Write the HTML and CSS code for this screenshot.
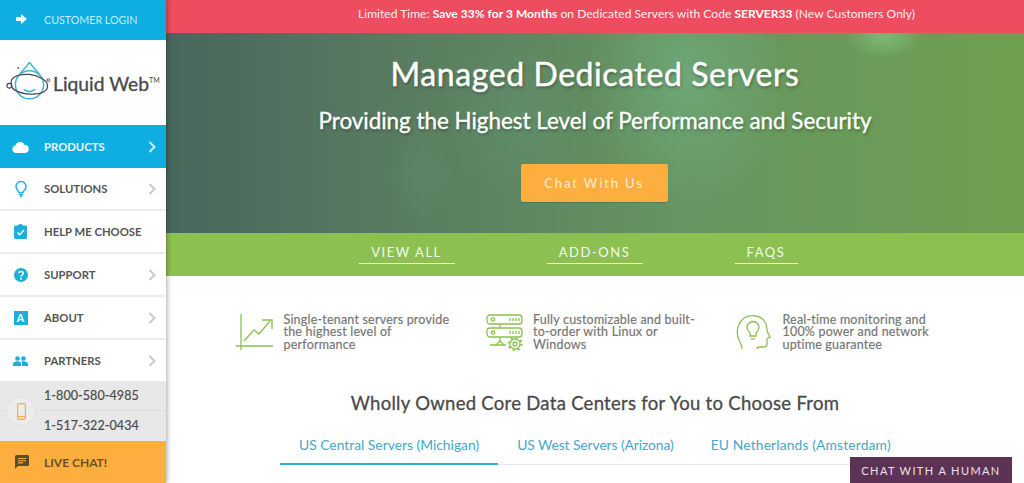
FILE: index.html
```html
<!DOCTYPE html>
<html lang="en">
<head>
<meta charset="utf-8">
<title>Managed Dedicated Servers</title>
<link rel="stylesheet" href="styles.css">
</head>
<body>
<div class="page">
  <aside class="sidebar">
    <a class="login"><svg class="login-icon" viewBox="0 0 12 12"><path d="M0 4h5V1l6 5-6 5V8H0z" fill="#fff"/></svg><span>CUSTOMER LOGIN</span></a>
    <div class="logo">
      <svg class="logo-mark" width="47" height="44" viewBox="0 0 50 44" fill="none">
        <path d="M25 2c3 5 9 10 11 14M25 2c-3 5-9 10-11 14" stroke="#3fb4d8" stroke-width="1.5"/>
        <circle cx="25" cy="26" r="15" stroke="#3fb4d8" stroke-width="1.6"/>
        <path d="M19 31c4 3 8 3 12 0" stroke="#3fb4d8" stroke-width="1.7"/>
        <path d="M6 26C3 19 12 14 25 15c10 1 20 7 19 12M44 27c1 6-7 9-15 9-12 0-24-4-23-10" stroke="#4a4a4a" stroke-width="1.3"/>
        <circle cx="3.500" cy="27" r="2.500" stroke="#4a4a4a" stroke-width="1.3"/>
        <circle cx="45" cy="21" r="1.500" stroke="#4a4a4a"/>
        <circle cx="13" cy="8" r="1" fill="#4a4a4a"/>
      </svg>
      <span class="logo-text">Liquid Web<sup class="logo-tm">TM</sup></span>
    </div>
    <nav class="menu">
      <a class="item active"><span class="ic"><svg width="17" height="12" viewBox="0 0 17 12"><path d="M4 12a3.800 3.800 0 0 1-.6-7.500A5 5 0 0 1 12.700 4 4 4 0 0 1 13 12z" fill="#fff"/></svg></span><span class="lbl">PRODUCTS</span><svg class="chev" viewBox="0 0 8 12"><path d="M1.500 1l5 5-5 5" fill="none" stroke="currentColor" stroke-width="2"/></svg></a>
      <a class="item"><span class="ic"><svg width="12" height="16" viewBox="0 0 12 16" fill="none" stroke="#1eaedb" stroke-width="1.400"><path d="M4 11.500C3.500 9.500 1 8.500 1 5.500a5 5 0 0 1 10 0c0 3-2.500 4-3 6z"/><path d="M4 13.500h4M5 15.300h2"/></svg></span><span class="lbl">SOLUTIONS</span><svg class="chev" viewBox="0 0 8 12"><path d="M1.500 1l5 5-5 5" fill="none" stroke="currentColor" stroke-width="2"/></svg></a>
      <a class="item"><span class="ic"><svg width="13" height="15" viewBox="0 0 13 15"><path d="M1.500 1.500H4a2.500 1.500 0 0 1 5 0h2.500A1.500 1.500 0 0 1 13 3v10.500a1.500 1.500 0 0 1-1.500 1.500h-10A1.500 1.500 0 0 1 0 13.500V3a1.500 1.500 0 0 1 1.500-1.500z" fill="#1eaedb"/><path d="M3.500 8.500l2.200 2.200 4-4.400" fill="none" stroke="#fff" stroke-width="1.500"/></svg></span><span class="lbl">HELP ME CHOOSE</span></a>
      <a class="item"><span class="ic"><svg width="14" height="14" viewBox="0 0 14 14"><circle cx="7" cy="7" r="7" fill="#1eaedb"/><path d="M4.800 5.300C5 2.800 9.300 3 9.300 5.300 9.300 7 7 7 7 8.700" fill="none" stroke="#fff" stroke-width="1.500"/><circle cx="7" cy="10.800" r="1" fill="#fff"/></svg></span><span class="lbl">SUPPORT</span><svg class="chev" viewBox="0 0 8 12"><path d="M1.500 1l5 5-5 5" fill="none" stroke="currentColor" stroke-width="2"/></svg></a>
      <a class="item"><span class="ic"><span class="about-a">A</span></span><span class="lbl">ABOUT</span><svg class="chev" viewBox="0 0 8 12"><path d="M1.500 1l5 5-5 5" fill="none" stroke="currentColor" stroke-width="2"/></svg></a>
      <a class="item last"><span class="ic"><svg width="15" height="10" viewBox="0 0 15 10" fill="#1eaedb"><circle cx="4.500" cy="2.500" r="2.300"/><circle cx="10.500" cy="2.500" r="2.300"/><path d="M0 10V8c0-1.800 2.500-2.700 4.500-2.700S8 6.200 8 8v2zM9 10V8c0-1-.3-1.800-1-2.400.9-.3 1.800-.3 2.500-.3 2 0 4.500.9 4.500 2.700v2z"/></svg></span><span class="lbl">PARTNERS</span><svg class="chev" viewBox="0 0 8 12"><path d="M1.500 1l5 5-5 5" fill="none" stroke="currentColor" stroke-width="2"/></svg></a>
    </nav>
    <div class="phones">
      <div class="phone-badge"><svg width="9" height="17" viewBox="0 0 10 19" fill="none" stroke="#f9ac41" stroke-width="1.300"><rect x=".7" y=".7" width="8.600" height="17.600" rx="1.500"/><path d="M.7 15h8.600"/></svg></div>
      <div class="phone">1-800-580-4985</div>
      <div class="phone">1-517-322-0434</div>
    </div>
    <a class="chat"><svg width="14" height="14" viewBox="0 0 14 14"><path d="M1.500 0h11A1.500 1.500 0 0 1 14 1.500v8a1.500 1.500 0 0 1-1.500 1.500H3l-3 3V1.500A1.500 1.500 0 0 1 1.500 0z" fill="#5f4a2a"/><path d="M3 3.500h8M3 5.700h8M3 7.900h5" stroke="#f9ac41" stroke-width="1.100"/></svg><span>LIVE CHAT!</span></a>
  </aside>
  <main class="main">
    <div class="promo">Limited Time: <b>Save 33% for 3 Months</b> on Dedicated Servers with Code <b>SERVER33</b> (New Customers Only)</div>
    <section class="hero">
      <h1 class="hero-title">Managed Dedicated Servers</h1>
      <h2 class="hero-sub">Providing the Highest Level of Performance and Security</h2>
      <a class="cta">Chat With Us</a>
    </section>
    <nav class="subnav">
      <a class="sublink w-a">VIEW ALL</a>
      <a class="sublink w-b">ADD-ONS</a>
      <a class="sublink w-c">FAQS</a>
    </nav>
    <section class="features">
      <div class="feature">
        <svg class="f-icon" width="38" height="38" viewBox="0 0 38 38" fill="none" stroke="#8cc152" stroke-width="1.300"><path d="M5 1v36M0 33h37"/><path d="M8 28l10-11 5 4 11-13"/><path d="M26 7h10v9"/></svg>
        <p>Single-tenant servers provide the highest level of performance</p>
      </div>
      <div class="feature">
        <svg class="f-icon" width="38" height="38" viewBox="0 0 38 38" fill="none" stroke="#8cc152" stroke-width="1.300"><rect x="1" y="2" width="35" height="9" rx="3"/><rect x="1" y="15" width="35" height="9" rx="3"/><circle cx="7" cy="6.500" r="1.700"/><circle cx="7" cy="19.500" r="1.700"/><path d="M24 5v3M27 5v3M30 5v3M33 5v3M24 18v3M27 18v3M30 18v3M33 18v3M14 11v4M14 24v4M4 32h16"/><path d="M10 32l4-4 4 4"/><circle cx="29" cy="31" r="5"/><circle cx="29" cy="31" r="2"/><circle cx="29" cy="31" r="6.500" stroke-width="2" stroke-dasharray="2 3.100"/></svg>
        <p>Fully customizable and built-to-order with Linux or Windows</p>
      </div>
      <div class="feature">
        <svg class="f-icon" width="38" height="38" viewBox="0 0 38 38" fill="none" stroke="#8cc152" stroke-width="1.300"><path d="M7 36c0-4-1-5-3-9C1 21 2 12 7 7c6-6 18-6 23 2 2 3 2 6 2 9l3 6c-1 1-3 1-3 2v5c0 2-2 3-4 3h-3c-2 0-3 1-3 2"/><path d="M15 20c-1-1-3-3-3-5.500a6 6 0 0 1 12 0c0 2.500-2 4.500-3 5.500v3h-6z"/><path d="M16 26h4"/></svg>
        <p>Real-time monitoring and 100% power and network uptime guarantee</p>
      </div>
    </section>
    <h3 class="dc-title">Wholly Owned Core Data Centers for You to Choose From</h3>
    <div class="tabs">
      <a class="tab on">US Central Servers (Michigan)</a>
      <a class="tab t-west">US West Servers (Arizona)</a>
      <a class="tab t-eu">EU Netherlands (Amsterdam)</a>
    </div>
  </main>
</div>
<a class="human">CHAT WITH A HUMAN</a>
</body>
</html>
```
FILE: styles.css
```css
* { box-sizing: border-box; }
html, body { margin: 0; height: 483px; overflow: hidden; background: #fff; }
body { font-family: "Lato", "Noto Sans", sans-serif; color: #4a4a4a; }
.page { display: flex; height: 483px; }

.sidebar { width: 166px; flex: none; display: flex; flex-direction: column; background: #fff; box-shadow: 1px 0 5px rgba(0,0,0,.35); z-index: 2; }
.login { height: 40px; flex: none; background: #0eaee2; color: #c4ecf9; display: flex; align-items: center; padding: 0 0 2px 16px; gap: 16px; font-size: 10.700px; }
.login-icon { width: 12px; height: 12px; flex: none; }
.logo { height: 85px; flex: none; display: flex; align-items: center; padding-left: 6px; gap: 0; }
.logo-mark { flex: none; margin-top: -3px; }
.logo-text { font-size: 19.300px; color: #4a4a4a; white-space: nowrap; position: relative; top: 1px; -webkit-text-stroke: .35px #4a4a4a; }
.logo-tm { font-size: 7px; vertical-align: 8px; line-height: 0; -webkit-text-stroke: 0; }

.menu { display: flex; flex-direction: column; }
.item { height: 43px; display: flex; align-items: center; border-bottom: 2px solid #ececec; font-size: 11.300px; font-weight: 700; color: #555; }
.item.last { height: 41px; border-bottom: 0; }
.item.active { background: #0eaee2; color: #e6f6fc; border-bottom: 0; }
.ic { width: 44px; flex: none; display: flex; justify-content: center; padding-right: 3px; }
.lbl { flex: 1; white-space: nowrap; }
.chev { width: 8px; height: 12px; margin-right: 10px; color: #c9c9c9; flex: none; }
.active .chev { color: #cdeefa; }
.about-a { width: 14px; height: 14px; background: #1eaedb; color: #fff; font-size: 10.500px; display: flex; align-items: center; justify-content: center; }

.phones { position: relative; height: 60px; flex: none; background: #e8e8e8; }
.phone { height: 29px; display: flex; align-items: center; padding-left: 44px; font-size: 12.500px; letter-spacing: .08px; color: #4d4d4d; -webkit-text-stroke: .2px #4d4d4d; }
.phone + .phone { height: 31px; border-top: 1px solid #dcdcdc; padding-bottom: 2px; }
.phone-badge { position: absolute; left: 6px; top: 15px; width: 30px; height: 30px; border-radius: 50%; background: #ececec; border: 1px solid #e0e0e0; display: flex; align-items: center; justify-content: center; }
.chat { flex: 1; background: #fcaf3e; display: flex; align-items: center; padding-left: 15px; gap: 15px; font-size: 12px; font-weight: 700; color: #6b4f24; }

.main { flex: 1; min-width: 0; display: flex; flex-direction: column; align-items: center; }
.promo { width: 100%; height: 33px; flex: none; background: #ee4c5f; color: #fdf0f1; padding: 0 0 2px 83px; text-align: center; line-height: 27px; font-size: 12px; letter-spacing: .04px; white-space: nowrap; }
.promo b { color: #fff; }
.hero { width: 100%; height: 200px; flex: none; display: flex; flex-direction: column; align-items: center;
  background:
    radial-gradient(ellipse 38px 22px at 718px 4px, rgba(130,195,125,.75), transparent),
    radial-gradient(ellipse 100px 135px at 520px 45px, rgba(115,180,135,.55), transparent),
    radial-gradient(ellipse 70px 80px at 350px 85px, rgba(100,160,130,.25), transparent),
    radial-gradient(ellipse 35px 50px at 257px 140px, rgba(100,160,130,.22), transparent),
    linear-gradient(90deg, #47675d 0%, #587a60 25%, #669561 60%, #6e9f50 100%); }
.hero-title { margin: 23px 0 0; font-size: 32px; line-height: 36px; font-weight: 400; letter-spacing: .58px; color: #fff; text-shadow: 1px 2px 3px rgba(0,0,0,.3); -webkit-text-stroke: .45px #fff; }
.hero-sub { margin: 16px 0 0; font-size: 22.400px; line-height: 26px; font-weight: 400; color: #fff; text-shadow: 1px 2px 3px rgba(0,0,0,.3); white-space: nowrap; -webkit-text-stroke: .35px #fff; }
.cta { margin: 30px 2px 0 0; width: 147px; height: 38px; background: #fcaf3e; border-radius: 2px; color: #fdeccf; font-size: 13px; letter-spacing: 1.900px; display: flex; align-items: center; justify-content: center; box-shadow: 0 1px 1px rgba(0,0,0,.15); }

.subnav { width: 100%; height: 43px; flex: none; background: #8cc152; display: flex; justify-content: center; align-items: flex-end; gap: 92px; padding-bottom: 12px; padding-right: 34px; }
.sublink { color: #f3f9ec; font-size: 13px; letter-spacing: 1.550px; text-align: center; border-bottom: 1px solid #f0f7e8; height: 21px; line-height: 19px; }
.w-a { width: 96px; }
.w-b { width: 96px; }
.w-c { width: 63px; }

.features { width: 750px; height: 87px; flex: none; display: flex; padding: 36px 0 0 0; position: relative; left: 16px; }
.feature { width: 249.500px; display: flex; gap: 9.500px; }
.f-icon { flex: none; margin-top: 1px; }
.feature p { margin: 2px 0 0; width: 175px; font-size: 12.500px; line-height: 12.300px; letter-spacing: .2px; color: #777; -webkit-text-stroke: .2px #777; }

.dc-title { margin: 28px 0 0; font-size: 18.500px; line-height: 24px; font-weight: 400; color: #4a4a4a; white-space: nowrap; letter-spacing: .28px; -webkit-text-stroke: .3px #4a4a4a; }
.tabs { width: 628px; margin: 20px 2px 0 0; display: flex; height: 30px; border-bottom: 1px solid #e6e6e6; }
.tab { height: 30px; padding: 0 19px; font-size: 13.850px; line-height: 20px; color: #46a8c8; white-space: nowrap; }
.t-west { letter-spacing: -.08px; padding-right: 18px; }
.t-eu { letter-spacing: .14px; }
.tab.on { border-bottom: 2px solid #2bb0d6; }

.human { position: fixed; right: 12px; bottom: 0; width: 162px; height: 26px; background: #5c3355; color: #e9e2e8; font-size: 11px; letter-spacing: 1.400px; display: flex; align-items: center; justify-content: center; }
```
